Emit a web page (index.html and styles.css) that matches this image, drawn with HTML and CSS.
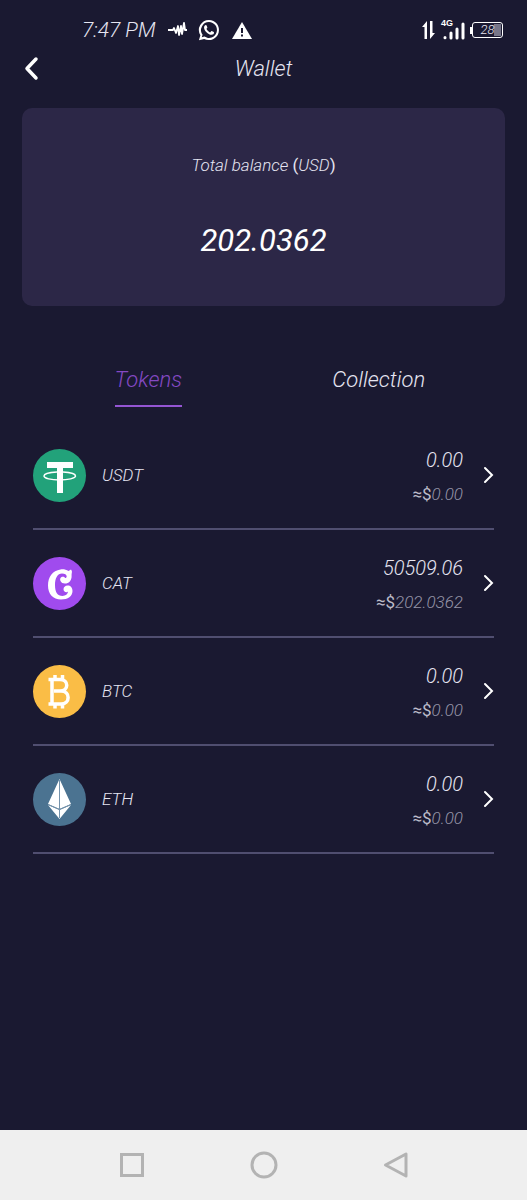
FILE: index.html
```html
<!DOCTYPE html>
<html lang="en">
<head>
<meta charset="utf-8">
<meta name="viewport" content="width=device-width, initial-scale=1">
<title>Wallet</title>
<link rel="stylesheet" href="styles.css">
</head>
<body>
<div class="status">
  <div class="status-group">
    <span class="clock">7:47 PM</span>
    <svg class="wave" width="19" height="16" viewBox="0 0 19 16"><path d="M0 8h5l1-2 2 5 2-7 1 9 2-9 1 8 2-11 1 7h2" fill="none" stroke="#fff" stroke-width="1.800" stroke-linejoin="round"/></svg>
    <svg class="whatsapp" width="22" height="22" viewBox="0 0 24 24"><path fill="#fff" d="M12 1A11 11 0 0 0 2.600 17.700L1 23.200l5.700-1.500A11 11 0 1 0 12 1zm0 2.300a8.700 8.700 0 1 1-4.900 15.900l-3 .8.900-2.900A8.700 8.700 0 0 1 12 3.300z"/><path fill="#fff" d="M8.600 6.500c-.9 0-2 1-2 2.700 0 3.300 4.500 8 8 8 1.800 0 2.900-1.100 2.900-2.500 0-.4-2.400-1.600-2.800-1.500-.5.100-.9 1.500-1.500 1.400-1.100-.2-3.500-2.300-3.900-3.700 0-.5 1-1 .9-1.600-.1-.5-.8-2.800-1.600-2.800z"/></svg>
    <svg class="alert" width="20" height="19" viewBox="0 0 20 19"><path d="M10 1 0 18h20z" fill="#fff"/><path d="M10 7v5M10 13.500v2" stroke="#1a1931" stroke-width="2"/></svg>
  </div>
  <div class="status-group">
    <svg width="14" height="18" viewBox="0 0 14 18"><path d="M5 18V0L0 6h2.500v12zM8 0v18l5-6h-2.500V0z" fill="#fff"/></svg>
    <svg class="signal" width="24" height="22" viewBox="0 0 24 22"><text class="network" x="0" y="7">4G</text><path d="M4 18.500v.2M10 14v5M16 10v9M22 5v14" stroke="#fff" stroke-width="3" stroke-linecap="round"/></svg>
    <span class="battery"><span class="battery-level">28</span></span>
  </div>
</div>
<header class="header">
  <button class="back" type="button" aria-label="Back"><svg width="14" height="23" viewBox="0 0 14 23"><path d="M12 2 3 11.500 12 21" fill="none" stroke="#fff" stroke-width="3.500" stroke-linecap="round" stroke-linejoin="round"/></svg></button>
  <h1 class="title">Wallet</h1>
</header>
<main class="content">
  <section class="card">
    <p class="card-label">Total balance <span class="paren">(</span>USD<span class="paren">)</span></p>
    <p class="card-value">202.0362</p>
  </section>
  <div class="tabs" role="tablist">
    <button class="tab tab-active" type="button" role="tab" aria-selected="true">Tokens</button>
    <button class="tab" type="button" role="tab" aria-selected="false">Collection</button>
  </div>
  <ul class="tokens">
    <li><a class="token" href="#usdt">
      <svg class="coin" viewBox="0 0 53 53"><circle cx="26.500" cy="26.500" r="26.500" fill="#22a27a"/><path d="M14 13h26v6h-10v25h-6V19H14z" fill="#fff"/><path d="M24 23c-8 .3-13 2-13 4 0 2.300 7 4 15.500 4s16-1.700 16-4c0-2-5-3.700-12.500-4" fill="none" stroke="#fff" stroke-width="1.500"/></svg>
      <span class="name">USDT</span>
      <span class="amounts"><span class="amount">0.00</span><span class="fiat"><span class="unit">≈$</span>0.00</span></span>
      <svg class="chevron" viewBox="0 0 10 16"><path d="m1 1 7 7-7 7"/></svg>
    </a></li>
    <li><a class="token" href="#cat">
      <svg class="coin" viewBox="0 0 53 53"><circle cx="26.500" cy="26.500" r="26.500" fill="#a04bee"/><path fill="#fff" d="M38 12.500 35.500 14C33 12.500 30 12 27.500 12.500 19.500 13.500 15 20 15 28.500 15 37 20 42.500 28 42.500c7 0 11.500-3.500 11.500-8.500 0-3.500-2-5.500-4.800-5.500-2.700 0-4.200 1.800-4.200 3.800 0 1.700 1.200 2.900 2.900 2.900.7 0 1.200-.2 1.700-.6-.3 2.700-2.500 4.400-5.600 4.400-5 0-7.500-3.700-7.500-11 0-7 2.500-11.500 7-11.500 2.800 0 4.700 1.300 4.700 3 0 .9-.6 1.500-1.500 1.500-.7-1.200-2-1.600-3.200-1.200-1.800.6-2.300 2.500-1.500 4.200.9 2 3.200 2.900 5.800 2.400 3-.6 4.700-2.600 5.200-5.600.3-2-.1-3.300.3-4.800.3-1.200.2-2.300-.8-3.500z"/></svg>
      <span class="name">CAT</span>
      <span class="amounts"><span class="amount">50509.06</span><span class="fiat"><span class="unit">≈$</span>202.0362</span></span>
      <svg class="chevron" viewBox="0 0 10 16"><path d="m1 1 7 7-7 7"/></svg>
    </a></li>
    <li><a class="token" href="#btc">
      <svg class="coin" viewBox="0 0 53 53"><circle cx="26.500" cy="26.500" r="26.500" fill="#fabd46"/><path d="M15.500 14.500H27c9 0 9 11.500 0 11.500h-6 7c9.500 0 9.500 13 0 13H15.500M19 14.500V39M22 10v4M29.500 10v4M22 39v4.500M29.500 39v4.500" fill="none" stroke="#fff" stroke-width="3.500"/></svg>
      <span class="name">BTC</span>
      <span class="amounts"><span class="amount">0.00</span><span class="fiat"><span class="unit">≈$</span>0.00</span></span>
      <svg class="chevron" viewBox="0 0 10 16"><path d="m1 1 7 7-7 7"/></svg>
    </a></li>
    <li><a class="token" href="#eth">
      <svg class="coin" viewBox="0 0 53 53"><circle cx="26.500" cy="26.500" r="26.500" fill="#4b7391"/><path d="M26.500 6 15 31l11.500 5L38 31zM15 32l11.500 14L38 32l-11.500 5z" fill="#fff"/><path d="M26.500 7v38M15 31.500l11.500 5 11.500-5" fill="none" stroke="#7593ac"/></svg>
      <span class="name">ETH</span>
      <span class="amounts"><span class="amount">0.00</span><span class="fiat"><span class="unit">≈$</span>0.00</span></span>
      <svg class="chevron" viewBox="0 0 10 16"><path d="m1 1 7 7-7 7"/></svg>
    </a></li>
  </ul>
</main>
<nav class="system-nav">
  <button class="nav-key" type="button" aria-label="Recent apps"><svg width="26" height="26" viewBox="0 0 26 26"><path d="M2.500 2.500h21v21h-21z"/></svg></button>
  <button class="nav-key" type="button" aria-label="Home"><svg width="26" height="26" viewBox="0 0 26 26"><circle cx="13" cy="13" r="12"/></svg></button>
  <button class="nav-key" type="button" aria-label="Back"><svg width="26" height="26" viewBox="0 0 26 26"><path d="M23 2v22L2.500 13z" stroke-linejoin="round"/></svg></button>
</nav>
</body>
</html>
```
FILE: styles.css
```css
* {
  box-sizing: border-box;
}

body {
  margin: 0;
  min-height: 100vh;
  display: flex;
  flex-direction: column;
  background: #1a1931;
  color: #e6e5f2;
  font-family: Roboto, "Liberation Sans", sans-serif;
  font-style: italic;
  font-weight: 300;
}

button {
  padding: 0;
  border: 0;
  background: none;
  color: inherit;
  font: inherit;
}

svg {
  display: block;
  overflow: visible;
}

.status {
  display: flex;
  justify-content: space-between;
  align-items: center;
  height: 48px;
  padding: 12px 24px 0 82px;
}

.status-group {
  display: flex;
  align-items: center;
}

.clock {
  font-size: 21px;
}

.wave {
  margin-left: 12px;
}

.whatsapp {
  margin-left: 11px;
}

.alert {
  margin-left: 12px;
}

.signal {
  margin: 0 5px;
}

.network {
  fill: #fff;
  font-family: "Liberation Sans", sans-serif;
  font-size: 9px;
  font-style: normal;
  font-weight: 700;
}

.battery {
  display: flex;
  align-items: center;
}

.battery::before {
  content: "";
  width: 2px;
  height: 7px;
  background: #fff;
}

.battery-level {
  width: 31px;
  height: 16px;
  border: 1px solid #fff;
  border-radius: 3px;
  background: linear-gradient(#777689, #777689) 21px 1px / 7px 12px no-repeat;
  font-size: 13px;
  line-height: 14px;
  text-align: center;
}

.header {
  display: grid;
  grid-template-columns: 1fr auto 1fr;
  align-items: center;
  height: 40px;
  padding: 0 24px;
}

.back {
  justify-self: start;
}

.title {
  margin: 0;
  font-size: 22px;
  font-weight: 300;
}

.content {
  flex: 1;
  padding: 20px 22px;
}

.card {
  display: flex;
  flex-direction: column;
  align-items: center;
  gap: 46px;
  padding: 46px 16px;
  border-radius: 10px;
  background: #2c2747;
}

.card-label,
.card-value {
  margin: 0;
}

.card-label {
  font-size: 17px;
  line-height: 22px;
}

.paren {
  font-style: normal;
  font-weight: 400;
}

.card-value {
  color: #fff;
  font-size: 31px;
  font-weight: 400;
  line-height: 38px;
}

.tabs {
  display: grid;
  grid-template-columns: 1fr 1fr;
  justify-items: center;
  margin: 60px 11px 0;
}

.tab {
  height: 41px;
  padding-bottom: 12px;
  border-bottom: 2px solid transparent;
  font-size: 22px;
}

.tab-active {
  border-color: #9455d3;
  color: #8549c4;
}

.tokens {
  margin: 15px 11px 0;
  padding: 0;
  list-style: none;
}

.token {
  display: flex;
  align-items: center;
  height: 108px;
  border-bottom: 2px solid #504e70;
  color: inherit;
  text-decoration: none;
}

.coin {
  width: 53px;
  height: 53px;
}

.name {
  margin-left: 16px;
  font-size: 17px;
}

.amounts {
  display: flex;
  flex-direction: column;
  align-items: flex-end;
  gap: 10px;
  margin-left: auto;
  padding-top: 4px;
}

.amount {
  font-size: 20px;
  line-height: 24px;
}

.fiat {
  color: #9493a6;
  font-size: 17px;
  line-height: 24px;
}

.unit {
  color: #bdbcc9;
  font-style: normal;
  font-weight: 400;
}

.chevron {
  width: 10px;
  height: 16px;
  margin-left: 21px;
  fill: none;
  stroke: #fff;
  stroke-width: 2;
  stroke-linecap: round;
}

.system-nav {
  display: flex;
  justify-content: center;
  align-items: center;
  gap: 106px;
  height: 70px;
  background: #efefef;
}

.nav-key svg {
  fill: none;
  stroke: #b3b3b3;
  stroke-width: 3;
}
```
